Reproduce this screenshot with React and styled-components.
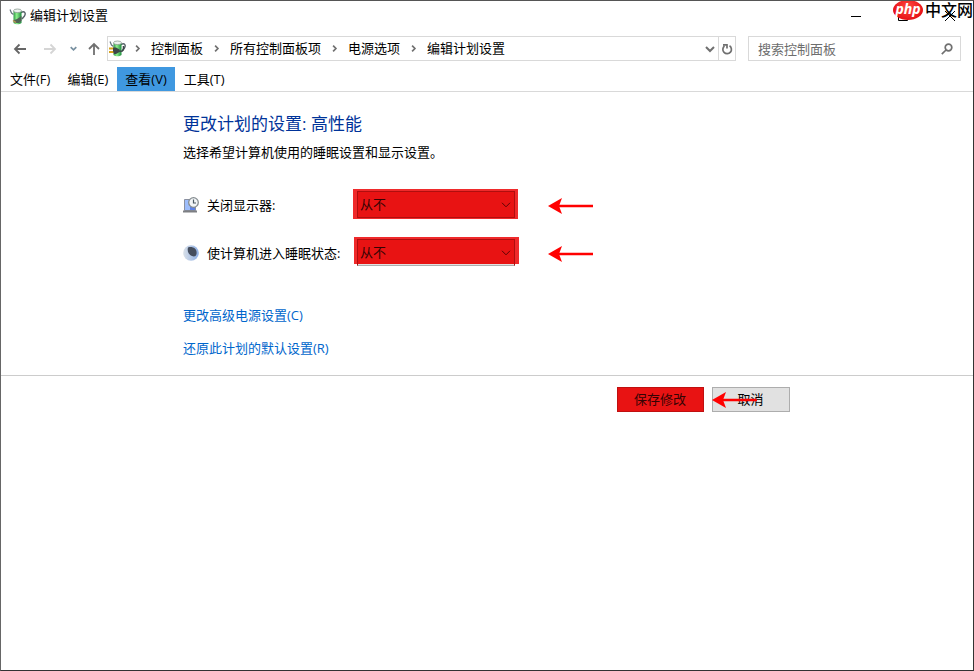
import React from "react";
import styled, { createGlobalStyle } from "styled-components";

const GlobalStyle = createGlobalStyle`
  * { box-sizing: border-box; }
  body {
    margin: 0;
    background: #fff;
    color: #000;
    font: 13px/18px "Open Sans", "Noto Sans CJK SC", sans-serif;
  }
  button, input, select { font: inherit; color: inherit; }
`;

const Window = styled.div`
  position: relative;
  min-height: 100vh;
  border: 1px solid #333;
  border-top-color: #555;
  border-left-color: #666;
  background: #fff;
  overflow: hidden;
`;

const TitleBar = styled.header`
  display: flex;
  align-items: center;
  height: 30px;
  padding-left: 8px;
`;

const Title = styled.h1`
  flex: 1;
  margin: 0 0 0 4px;
  padding-bottom: 2px;
  font-size: 13px;
  font-weight: 400;
`;

const CaptionButton = styled.button`
  display: flex;
  justify-content: center;
  align-items: center;
  width: 47px;
  height: 30px;
  padding: 0;
  border: 0;
  background: none;
`;

const Watermark = styled.div`
  position: absolute;
  top: -3px;
  right: 0;
  display: flex;
  align-items: center;
  gap: 2px;
  pointer-events: none;
`;

const WatermarkBadge = styled.span`
  display: flex;
  justify-content: center;
  width: 30px;
  height: 20px;
  border-radius: 50%;
  background: radial-gradient(ellipse at 50% 35%, #ff4a40, #e60f16 75%);
  color: #fff;
  font: italic 700 14px/17px "Open Sans", sans-serif;
`;

const WatermarkName = styled.span`
  font-size: 16px;
  font-weight: 500;
  line-height: 24px;
`;

const NavBar = styled.nav`
  display: flex;
  align-items: center;
  padding: 5px 12px 0 9px;
`;

const NavButton = styled.button`
  display: flex;
  align-items: center;
  justify-content: center;
  width: ${(p) => (p.$narrow ? "16px" : "20px")};
  height: 24px;
  padding: 0;
  border: 0;
  background: none;
  margin-right: ${(p) => p.$gap || "0"};
`;

const AddressBar = styled.div`
  display: flex;
  flex: 1;
  min-width: 0;
  align-items: center;
  height: 25px;
  padding-left: 1px;
  border: 1px solid #d9d9d9;
`;

const Crumbs = styled.ol`
  display: flex;
  flex: 1;
  min-width: 0;
  margin: 0 0 0 -2px;
  padding: 0;
  list-style: none;
  white-space: nowrap;
  overflow: hidden;
`;

const Crumb = styled.li`
  display: flex;
  align-items: center;
`;

const CrumbLink = styled.a`
  padding-bottom: 2px;
  color: #000;
  text-decoration: none;
`;

const CrumbSeparator = styled.span`
  display: flex;
  justify-content: center;
  width: 27px;
`;

const AddressButton = styled.button`
  display: flex;
  align-items: center;
  justify-content: center;
  width: 17px;
  height: 23px;
  padding: 0;
  border: 0;
  border-left: 1px solid ${(p) => (p.$divided ? "#d9d9d9" : "transparent")};
  background: none;
`;

const SearchBox = styled.label`
  display: flex;
  align-items: center;
  width: 213px;
  height: 25px;
  margin-left: 12px;
  padding: 0 7px 0 9px;
  border: 1px solid #d9d9d9;
`;

const SearchInput = styled.input`
  flex: 1;
  min-width: 0;
  height: 22px;
  padding: 0;
  border: 0;
  outline: 0;
  background: none;
  &::placeholder { color: #6d6d6d; opacity: 1; }
`;

const MenuBar = styled.div`
  display: flex;
  gap: 1px;
  margin-top: 6px;
  padding-left: 1px;
  border-bottom: 1px solid #d9d9d9;
`;

const MenuButton = styled.button`
  height: 24px;
  padding: 0 8px;
  border: 0;
  background: ${(p) => (p.$active ? "#3f98e0" : "none")};
`;

const Content = styled.main`
  max-width: 608px;
  margin: 0 auto;
  padding-top: 20px;
`;

const Heading = styled.h2`
  margin: 0;
  color: #003399;
  font-size: 17px;
  font-weight: 400;
  line-height: 24px;
`;

const Description = styled.p`
  margin: 7px 0 28px;
`;

const SettingRow = styled.div`
  display: flex;
  align-items: center;
  height: 30px;
  margin-bottom: 18px;
`;

const SettingLabel = styled.label`
  display: flex;
  align-items: center;
  gap: 8px;
  width: 170px;
  padding-top: 2px;
  white-space: nowrap;
`;

const Highlight = styled.div`
  position: relative;
  width: 165px;
  height: ${(p) => (p.$short ? "27px" : "30px")};
  align-self: flex-start;
  margin-left: ${(p) => (p.$short ? "1px" : "0")};
  padding: 2px 0 0 ${(p) => (p.$short ? "3px" : "4px")};
  background: #ef2a2b;
`;

const Select = styled.select`
  display: block;
  width: 158px;
  height: 27px;
  padding: 0 24px 1px 2px;
  border: 1px solid #b00e0e;
  border-bottom-color: ${(p) => (p.$short ? "#adadad" : "#b00e0e")};
  border-radius: 0;
  appearance: none;
  background: ${(p) => (p.$short ? "linear-gradient(#e81313 24px, #e1e1e1 24px)" : "#e81313")};
  color: #350303;
`;

const SelectChevron = styled.svg`
  position: absolute;
  top: 13px;
  right: ${(p) => (p.$short ? "8px" : "7px")};
  pointer-events: none;
`;

const RowArrow = styled.span`
  display: flex;
  margin: 3px 0 0 ${(p) => (p.$short ? "28px" : "29px")};
`;

const Links = styled.div`
  display: flex;
  flex-direction: column;
  align-items: flex-start;
  gap: 15px;
  padding: 21px 0 18px;
`;

const TextLink = styled.a`
  color: #0066cc;
  text-decoration: none;
`;

const Footer = styled.footer`
  border-top: 1px solid #ccc;
`;

const Actions = styled.div`
  display: flex;
  justify-content: flex-end;
  gap: 8px;
  max-width: 608px;
  margin: 0 auto;
  padding: 11px 1px 0 0;
`;

const ActionButton = styled.button`
  width: ${(p) => (p.$primary ? "87px" : "78px")};
  height: 25px;
  padding: 0 1px 1px 0;
  border: 1px solid ${(p) => (p.$primary ? "#c01010" : "#adadad")};
  background: ${(p) => (p.$primary ? "#e81313" : "#e1e1e1")};
  color: ${(p) => (p.$primary ? "#350303" : "#000")};
`;

const ActionSlot = styled.div`
  position: relative;
`;

const ActionArrow = styled.span`
  position: absolute;
  top: 5px;
  left: -1px;
  display: flex;
  pointer-events: none;
`;

const PowerIcon = ({ plug }) => {
  const fill = plug ? "cellA" : "cellB";
  return (
    <svg width="17" height="17" viewBox="0 0 17 17" aria-hidden="true">
      <defs>
        <linearGradient id={fill}>
          <stop offset="0" stopColor="#2d9a45" />
          <stop offset=".4" stopColor="#8ff08c" />
          <stop offset="1" stopColor="#1c8a3c" />
        </linearGradient>
      </defs>
      <path d="M12 4.500c4-2 5 1 3.500 3.500l-2.500 3" fill="none" stroke="#59646a" strokeWidth="1.400" />
      <path d="M4.500 3v12c2 1.800 6 1.800 8 0V3z" fill={`url(#${fill})`} />
      <ellipse cx="8.500" cy="2.800" rx="4" ry="1.800" fill="#eef3f0" stroke="#8a9a90" strokeWidth=".8" />
      <path d="M1 1.500l1.500 3.500 2 1.500" fill="none" stroke="#66757c" strokeWidth="1.200" />
      {plug ? (
        <>
          <path d="M0 8.500h5M0 12h5" stroke="#d9a51c" strokeWidth="1.800" />
          <path d="M4 7.500h3l3.500 2v2.500l-3.500 2H5l-1-3z" fill="#3d4648" />
          <path d="M10 11c4 1 5-1 4.500-5" fill="none" stroke="#3d4648" strokeWidth="1.600" />
        </>
      ) : (
        <>
          <path d="M4 12.500l4-1.500 4.500-3v5l-2.500 2H6z" fill="#4f6355" />
          <path d="M4 12.500l3 2" stroke="#b99a50" strokeWidth="1.500" />
        </>
      )}
    </svg>
  );
};

const Arrow = ({ direction, color }) => (
  <svg width="14" height="14" viewBox="0 0 14 14" fill="none" stroke={color} strokeWidth="1.800" aria-hidden="true">
    {direction === "left" && <path d="M13 7H2M6.500 2.500L2 7l4.500 4.500" />}
    {direction === "right" && <path d="M1 7h11M7.500 2.500L12 7l-4.500 4.500" />}
    {direction === "up" && <path d="M7 13V2M2 7l5-5 5 5" />}
  </svg>
);

const Chevron = ({ right, small, color = "#707070" }) => {
  const size = small ? 7 : 10;
  return (
    <svg width={size} height={size} viewBox="0 0 10 10" fill="none" stroke={color} strokeWidth={small ? 2.400 : 2} aria-hidden="true">
      <path d={right ? "M3 1l4 4-4 4" : "M1 3l4 4 4-4"} />
    </svg>
  );
};

const RedArrow = () => (
  <svg width="46" height="16" viewBox="0 0 46 16" aria-hidden="true">
    <path d="M12 8h34" stroke="#f00" strokeWidth="2.300" />
    <path d="M1 8L15 0l-3 8 3 8z" fill="#f00" />
  </svg>
);

const DisplayIcon = () => (
  <svg width="16" height="16" viewBox="0 0 16 16" aria-hidden="true">
    <path d="M1.500 2.500h11v11h-11z" fill="#5d82e8" stroke="#8a90a0" />
    <path d="M2 3h5v10H2z" fill="#9dbdfb" />
    <path d="M0 14.500h14" stroke="#7d7f83" strokeWidth="2" />
    <circle cx="10.500" cy="5.500" r="4.800" fill="#f2f5f6" stroke="#858c90" strokeWidth="1.300" />
    <path d="M10.500 2.500v3.500H13" fill="none" stroke="#4b5963" strokeWidth="1.200" />
  </svg>
);

const SleepIcon = () => (
  <svg width="16" height="16" viewBox="0 0 16 16" aria-hidden="true">
    <defs>
      <linearGradient id="moon">
        <stop offset="0" stopColor="#d9e0e8" />
        <stop offset="1" stopColor="#8fb0e6" />
      </linearGradient>
    </defs>
    <circle cx="8" cy="8" r="7.800" fill="url(#moon)" />
    <path d="M5 2.500c5-1.500 9.500 1.500 8.500 6.500-.5 2.500-2.500 3-4.500 2C5.500 9.500 4 6 5 2.500z" fill="#454e5e" />
  </svg>
);

const crumbs = ["控制面板", "所有控制面板项", "电源选项", "编辑计划设置"];
const menus = ["文件(F)", "编辑(E)", "查看(V)", "工具(T)"];
const settings = [
  { id: "display", label: "关闭显示器:", Icon: DisplayIcon, short: false },
  { id: "sleep", label: "使计算机进入睡眠状态:", Icon: SleepIcon, short: true },
];

export default function App() {
  return (
    <Window>
      <GlobalStyle />
      <TitleBar>
        <PowerIcon />
        <Title>编辑计划设置</Title>
        <CaptionButton aria-label="最小化">
          <svg width="10" height="10"><path d="M0 5.500h10" stroke="#000" /></svg>
        </CaptionButton>
        <CaptionButton aria-label="最大化">
          <svg width="10" height="10"><path d="M.5.5h9v9h-9z" fill="none" stroke="#000" /></svg>
        </CaptionButton>
        <CaptionButton aria-label="关闭">
          <svg width="10" height="10"><path d="M0 0l10 10M10 0L0 10" stroke="#000" /></svg>
        </CaptionButton>
      </TitleBar>

      <NavBar>
        <NavButton $gap="10px" aria-label="后退"><Arrow direction="left" color="#666" /></NavButton>
        <NavButton $gap="5px" aria-label="前进"><Arrow direction="right" color="#d5d5d5" /></NavButton>
        <NavButton $narrow $gap="3px" aria-label="最近位置"><Chevron small color="#7890a0" /></NavButton>
        <NavButton $gap="3px" aria-label="向上"><Arrow direction="up" color="#707070" /></NavButton>
        <AddressBar>
          <PowerIcon plug />
          <Crumbs>
            {crumbs.map((name) => (
              <Crumb key={name}>
                <CrumbSeparator><Chevron right small /></CrumbSeparator>
                <CrumbLink href="#">{name}</CrumbLink>
              </Crumb>
            ))}
          </Crumbs>
          <AddressButton aria-label="历史记录"><Chevron /></AddressButton>
          <AddressButton $divided aria-label="刷新">
            <svg width="12" height="12" viewBox="0 0 12 12" fill="none" stroke="#707070" strokeWidth="1.700">
              <path d="M8.500 2.800A4.300 4.300 0 1 1 3.500 3M2 1.800h4V5.500" />
            </svg>
          </AddressButton>
        </AddressBar>
        <SearchBox>
          <SearchInput type="search" placeholder="搜索控制面板" aria-label="搜索控制面板" />
          <svg width="12" height="12" viewBox="0 0 12 12" fill="none" stroke="#707070" strokeWidth="1.700">
            <circle cx="7.500" cy="4.500" r="3.300" />
            <path d="M5 7L.8 11.200" />
          </svg>
        </SearchBox>
      </NavBar>

      <MenuBar>
        {menus.map((name) => (
          <MenuButton key={name} $active={name === "查看(V)"}>{name}</MenuButton>
        ))}
      </MenuBar>

      <Content>
        <Heading>更改计划的设置: 高性能</Heading>
        <Description>选择希望计算机使用的睡眠设置和显示设置。</Description>
        {settings.map(({ id, label, Icon, short }) => (
          <SettingRow key={id}>
            <SettingLabel htmlFor={id}><Icon />{label}</SettingLabel>
            <Highlight $short={short}>
              <Select id={id} $short={short} defaultValue="never">
                <option value="never">从不</option>
              </Select>
              <SelectChevron $short={short} width="10" height="6" viewBox="0 0 10 6" fill="none" stroke="#5a0505">
                <path d="M1 .8l4 4 4-4" />
              </SelectChevron>
            </Highlight>
            <RowArrow $short={short}><RedArrow /></RowArrow>
          </SettingRow>
        ))}
        <Links>
          <TextLink href="#">更改高级电源设置(C)</TextLink>
          <TextLink href="#">还原此计划的默认设置(R)</TextLink>
        </Links>
      </Content>

      <Footer>
        <Actions>
          <ActionButton $primary>保存修改</ActionButton>
          <ActionSlot>
            <ActionButton>取消</ActionButton>
            <ActionArrow><RedArrow /></ActionArrow>
          </ActionSlot>
        </Actions>
      </Footer>

      <Watermark>
        <WatermarkBadge>php</WatermarkBadge>
        <WatermarkName>中文网</WatermarkName>
      </Watermark>
    </Window>
  );
}
